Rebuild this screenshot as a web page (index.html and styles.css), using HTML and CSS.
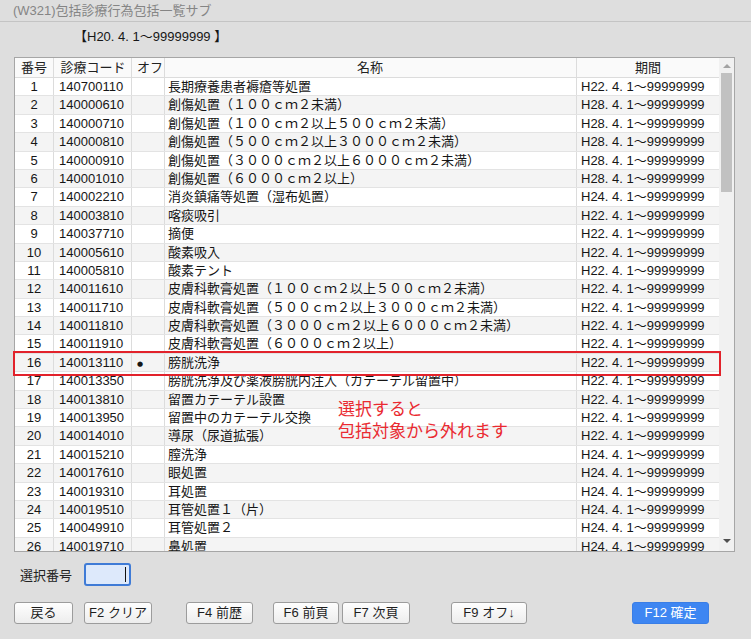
FILE: index.html
```html
<!DOCTYPE html>
<html lang="ja">
<head>
<meta charset="utf-8">
<title>(W321)包括診療行為包括一覧サブ</title>
<link rel="stylesheet" href="styles.css">
</head>
<body>
<div class="window">
  <header class="titlebar">(W321)包括診療行為包括一覧サブ</header>
  <div class="range">【H20. 4. 1〜99999999 】</div>

  <section class="list-panel">
    <div class="list-table">
      <div class="row head">
        <div class="cell c-no">番号</div>
        <div class="cell c-code center">診療コード</div>
        <div class="cell c-off">オフ</div>
        <div class="cell c-name center">名称</div>
        <div class="cell c-term center">期間</div>
      </div>
      <div class="list-body">
        <div class="row"><div class="cell c-no">1</div><div class="cell c-code">140700110</div><div class="cell c-off"></div><div class="cell c-name">長期療養患者褥瘡等処置</div><div class="cell c-term">H22. 4. 1〜99999999</div></div>
        <div class="row"><div class="cell c-no">2</div><div class="cell c-code">140000610</div><div class="cell c-off"></div><div class="cell c-name">創傷処置（１００ｃｍ２未満）</div><div class="cell c-term">H28. 4. 1〜99999999</div></div>
        <div class="row"><div class="cell c-no">3</div><div class="cell c-code">140000710</div><div class="cell c-off"></div><div class="cell c-name">創傷処置（１００ｃｍ２以上５００ｃｍ２未満）</div><div class="cell c-term">H28. 4. 1〜99999999</div></div>
        <div class="row"><div class="cell c-no">4</div><div class="cell c-code">140000810</div><div class="cell c-off"></div><div class="cell c-name">創傷処置（５００ｃｍ２以上３０００ｃｍ２未満）</div><div class="cell c-term">H28. 4. 1〜99999999</div></div>
        <div class="row"><div class="cell c-no">5</div><div class="cell c-code">140000910</div><div class="cell c-off"></div><div class="cell c-name">創傷処置（３０００ｃｍ２以上６０００ｃｍ２未満）</div><div class="cell c-term">H28. 4. 1〜99999999</div></div>
        <div class="row"><div class="cell c-no">6</div><div class="cell c-code">140001010</div><div class="cell c-off"></div><div class="cell c-name">創傷処置（６０００ｃｍ２以上）</div><div class="cell c-term">H28. 4. 1〜99999999</div></div>
        <div class="row"><div class="cell c-no">7</div><div class="cell c-code">140002210</div><div class="cell c-off"></div><div class="cell c-name">消炎鎮痛等処置（湿布処置）</div><div class="cell c-term">H24. 4. 1〜99999999</div></div>
        <div class="row"><div class="cell c-no">8</div><div class="cell c-code">140003810</div><div class="cell c-off"></div><div class="cell c-name">喀痰吸引</div><div class="cell c-term">H22. 4. 1〜99999999</div></div>
        <div class="row"><div class="cell c-no">9</div><div class="cell c-code">140037710</div><div class="cell c-off"></div><div class="cell c-name">摘便</div><div class="cell c-term">H22. 4. 1〜99999999</div></div>
        <div class="row"><div class="cell c-no">10</div><div class="cell c-code">140005610</div><div class="cell c-off"></div><div class="cell c-name">酸素吸入</div><div class="cell c-term">H22. 4. 1〜99999999</div></div>
        <div class="row"><div class="cell c-no">11</div><div class="cell c-code">140005810</div><div class="cell c-off"></div><div class="cell c-name">酸素テント</div><div class="cell c-term">H22. 4. 1〜99999999</div></div>
        <div class="row"><div class="cell c-no">12</div><div class="cell c-code">140011610</div><div class="cell c-off"></div><div class="cell c-name">皮膚科軟膏処置（１００ｃｍ２以上５００ｃｍ２未満）</div><div class="cell c-term">H22. 4. 1〜99999999</div></div>
        <div class="row"><div class="cell c-no">13</div><div class="cell c-code">140011710</div><div class="cell c-off"></div><div class="cell c-name">皮膚科軟膏処置（５００ｃｍ２以上３０００ｃｍ２未満）</div><div class="cell c-term">H22. 4. 1〜99999999</div></div>
        <div class="row"><div class="cell c-no">14</div><div class="cell c-code">140011810</div><div class="cell c-off"></div><div class="cell c-name">皮膚科軟膏処置（３０００ｃｍ２以上６０００ｃｍ２未満）</div><div class="cell c-term">H22. 4. 1〜99999999</div></div>
        <div class="row"><div class="cell c-no">15</div><div class="cell c-code">140011910</div><div class="cell c-off"></div><div class="cell c-name">皮膚科軟膏処置（６０００ｃｍ２以上）</div><div class="cell c-term">H22. 4. 1〜99999999</div></div>
        <div class="row"><div class="cell c-no">16</div><div class="cell c-code">140013110</div><div class="cell c-off"><span class="mark">●</span></div><div class="cell c-name">膀胱洗浄</div><div class="cell c-term">H22. 4. 1〜99999999</div></div>
        <div class="row"><div class="cell c-no">17</div><div class="cell c-code">140013350</div><div class="cell c-off"></div><div class="cell c-name">膀胱洗浄及び薬液膀胱内注入（カテーテル留置中）</div><div class="cell c-term">H22. 4. 1〜99999999</div></div>
        <div class="row"><div class="cell c-no">18</div><div class="cell c-code">140013810</div><div class="cell c-off"></div><div class="cell c-name">留置カテーテル設置</div><div class="cell c-term">H22. 4. 1〜99999999</div></div>
        <div class="row"><div class="cell c-no">19</div><div class="cell c-code">140013950</div><div class="cell c-off"></div><div class="cell c-name">留置中のカテーテル交換</div><div class="cell c-term">H22. 4. 1〜99999999</div></div>
        <div class="row"><div class="cell c-no">20</div><div class="cell c-code">140014010</div><div class="cell c-off"></div><div class="cell c-name">導尿（尿道拡張）</div><div class="cell c-term">H22. 4. 1〜99999999</div></div>
        <div class="row"><div class="cell c-no">21</div><div class="cell c-code">140015210</div><div class="cell c-off"></div><div class="cell c-name">膣洗浄</div><div class="cell c-term">H24. 4. 1〜99999999</div></div>
        <div class="row"><div class="cell c-no">22</div><div class="cell c-code">140017610</div><div class="cell c-off"></div><div class="cell c-name">眼処置</div><div class="cell c-term">H24. 4. 1〜99999999</div></div>
        <div class="row"><div class="cell c-no">23</div><div class="cell c-code">140019310</div><div class="cell c-off"></div><div class="cell c-name">耳処置</div><div class="cell c-term">H24. 4. 1〜99999999</div></div>
        <div class="row"><div class="cell c-no">24</div><div class="cell c-code">140019510</div><div class="cell c-off"></div><div class="cell c-name">耳管処置１（片）</div><div class="cell c-term">H24. 4. 1〜99999999</div></div>
        <div class="row"><div class="cell c-no">25</div><div class="cell c-code">140049910</div><div class="cell c-off"></div><div class="cell c-name">耳管処置２</div><div class="cell c-term">H24. 4. 1〜99999999</div></div>
        <div class="row"><div class="cell c-no">26</div><div class="cell c-code">140019710</div><div class="cell c-off"></div><div class="cell c-name">鼻処置</div><div class="cell c-term">H24. 4. 1〜99999999</div></div>
      </div>
    </div>
    <div class="scrollbar">
      <div class="sb-arrow up"></div>
      <div class="sb-track"><div class="sb-thumb"></div></div>
      <div class="sb-arrow down"></div>
    </div>

    <div class="focus-frame"></div>
    <p class="note">選択すると<br>包括対象から外れます</p>
  </section>

  <div class="select-row">
    <label class="select-label" for="sel">選択番号</label>
    <div class="select-input" id="sel"><span class="caret"></span></div>
  </div>

  <nav class="buttons">
    <button class="btn w-back">戻る</button>
    <button class="btn w-clear gap-11">F2 クリア</button>
    <button class="btn w-prev-hist gap-34">F4 前歴</button>
    <button class="btn w-prev-page gap-20">F6 前頁</button>
    <button class="btn w-next-page gap-3">F7 次頁</button>
    <button class="btn w-off gap-41">F9 オフ↓</button>
    <button class="btn primary w-ok gap-105">F12 確定</button>
  </nav>
</div>
</body>
</html>
```

FILE: styles.css
```css
* { box-sizing: border-box; }

html, body {
  margin: 0;
  padding: 0;
  background: #dedede;
}

body {
  font-family: "Liberation Sans", "Noto Sans CJK JP", sans-serif;
  font-size: 13px;
  color: #161616;
  width: 751px;
  height: 639px;
  overflow: hidden;
}

.window {
  display: flex;
  flex-direction: column;
}

/* window caption */
.titlebar {
  height: 22px;
  padding: 1px 0 0 13px;
  line-height: 19px;
  color: #858585;
  border-bottom: 1px solid #c4c4c4;
}

.range {
  height: 35px;
  padding: 7px 0 0 74px;
  line-height: 16px;
  color: #161616;
}

/* list panel */
.list-panel {
  position: relative;
  margin-left: 14px;
  width: 721px;
  height: 495px;
  border: 1px solid #a6a6a6;
  background: #fff;
  display: flex;
}

.list-table {
  flex: 0 0 704px;
  display: flex;
  flex-direction: column;
}

.list-body {
  height: 473px;
  overflow: hidden;
}

.row {
  display: grid;
  grid-template-columns: 39px 78px 33px 412px 142px;
  height: 18.4px;
  border-bottom: 1px solid #e3e3e3;
  background: #fff;
}

.list-body .row:nth-child(even) { background: #f4f4f4; }

.row.head {
  height: 20px;
  background: #fafafa;
  border-bottom: 1px solid #dcdcdc;
}

.cell {
  border-right: 1px solid #dcdcdc;
  padding: 0 4px;
  line-height: 17px;
  white-space: nowrap;
  overflow: hidden;
}

.row.head .cell { line-height: 19px; color: #222; }

.cell.c-term { border-right: none; }
.cell.c-no { text-align: center; padding: 0; }
.cell.c-code { padding-left: 5px; }
.cell.c-off { padding-left: 5px; }
.cell.c-name { padding-left: 3px; }
.cell.c-term { padding-left: 4px; }
.cell.center { text-align: center; }

.mark {
  font-family: "DejaVu Sans", sans-serif;
  font-size: 7px;
  vertical-align: 1px;
}

/* vertical scrollbar */
.scrollbar {
  flex: 0 0 15px;
  background: #f1f1f1;
  display: flex;
  flex-direction: column;
}

.sb-arrow {
  height: 15px;
  display: flex;
  align-items: center;
  justify-content: center;
}

.sb-arrow::before {
  content: "";
  width: 0;
  height: 0;
  border-left: 4px solid transparent;
  border-right: 4px solid transparent;
}

.sb-arrow.up::before { border-bottom: 4px solid #a3a3a3; }
.sb-arrow.down::before { border-top: 4px solid #505050; }
.sb-arrow.down { height: 12px; align-items: flex-start; }

.sb-track {
  flex: 1;
  padding: 0 2px;
}

.sb-thumb {
  height: 119px;
  background: #c1c1c1;
}

/* annotation over the list */
.focus-frame {
  position: absolute;
  left: -2px;
  top: 293px;
  width: 708px;
  height: 25px;
  border: 2px solid #e2222b;
  pointer-events: none;
}

.note {
  position: absolute;
  left: 323px;
  top: 341px;
  margin: 0;
  font-size: 17px;
  line-height: 22px;
  color: #ea2a31;
}

/* selection number input */
.select-row {
  display: flex;
  align-items: center;
  height: 23px;
  margin-top: 11px;
  padding-left: 20px;
}

.select-label {
  width: 64px;
  color: #222;
}

.select-input {
  width: 47px;
  height: 23px;
  border: 2px solid #3f7bd6;
  border-radius: 3px;
  background: #dde9fb;
  display: flex;
  align-items: center;
  justify-content: flex-end;
  padding-right: 3px;
}

.caret {
  width: 1px;
  height: 15px;
  background: #111;
}

/* function key buttons */
.buttons {
  display: flex;
  margin-top: 16px;
  padding-left: 14px;
}

.btn {
  height: 22px;
  padding: 0;
  font-family: "Liberation Sans", "Noto Sans CJK JP", sans-serif;
  font-size: 13px;
  color: #1e1e1e;
  background: linear-gradient(#fefefe, #ededed);
  border: 1px solid #9c9c9c;
  border-radius: 3px;
  line-height: 20px;
}

.btn.primary {
  background: #3e86f2;
  border-color: #3a7ee6;
  color: #fff;
}

.w-back { width: 59px; }
.w-clear { width: 68px; }
.w-prev-hist { width: 67px; }
.w-prev-page { width: 66px; }
.w-next-page { width: 68px; }
.w-off { width: 76px; }
.w-ok { width: 77px; }

.gap-3 { margin-left: 3px; }
.gap-11 { margin-left: 11px; }
.gap-20 { margin-left: 20px; }
.gap-34 { margin-left: 34px; }
.gap-41 { margin-left: 41px; }
.gap-105 { margin-left: 105px; }
```
